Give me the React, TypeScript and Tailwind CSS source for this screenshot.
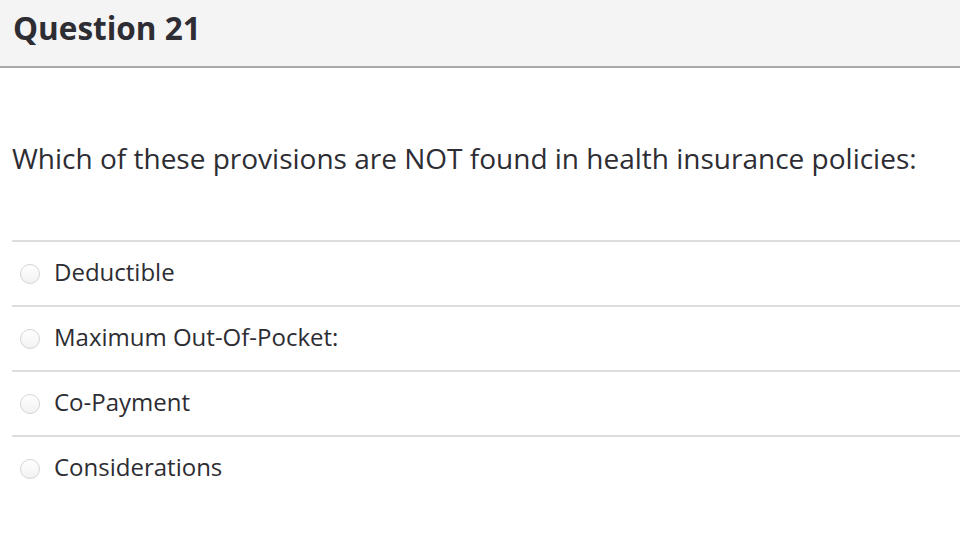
export default function App() {
  const options = ["Deductible", "Maximum Out-Of-Pocket:", "Co-Payment", "Considerations"];

  return (
    <div className="w-[960px] h-[534px] bg-white text-[#2d2d33] overflow-hidden" style={{ fontFamily: '"Open Sans", sans-serif' }}>
      {/* Header */}
      <div className="h-[68px] bg-[#f4f4f4] border-b-2 border-[#aaaaaa] pl-[13px] pt-[6px]">
        <h1 className="text-[31.5px] font-bold leading-[44px] m-0">Question 21</h1>
      </div>

      {/* Question */}
      <div className="pl-[12px] pt-[71px] pb-[63px]">
        <p className="text-[28px] leading-[38px] m-0">Which of these provisions are NOT found in health insurance policies:</p>
      </div>

      {/* Options */}
      <div className="ml-[12px]">
        {options.map((o) => (
          <label key={o} className="flex items-center h-[65px] border-t-2 border-[#dddddd] pl-[8px]">
            <span className="w-[20px] h-[20px] mt-[1px] rounded-full border border-[#d4d4d4] bg-gradient-to-b from-white to-[#f2f2f2] shrink-0" />
            <span className="ml-[14px] mb-[3px] text-[24px] leading-[30px]">{o}</span>
          </label>
        ))}
      </div>
    </div>
  );
}
